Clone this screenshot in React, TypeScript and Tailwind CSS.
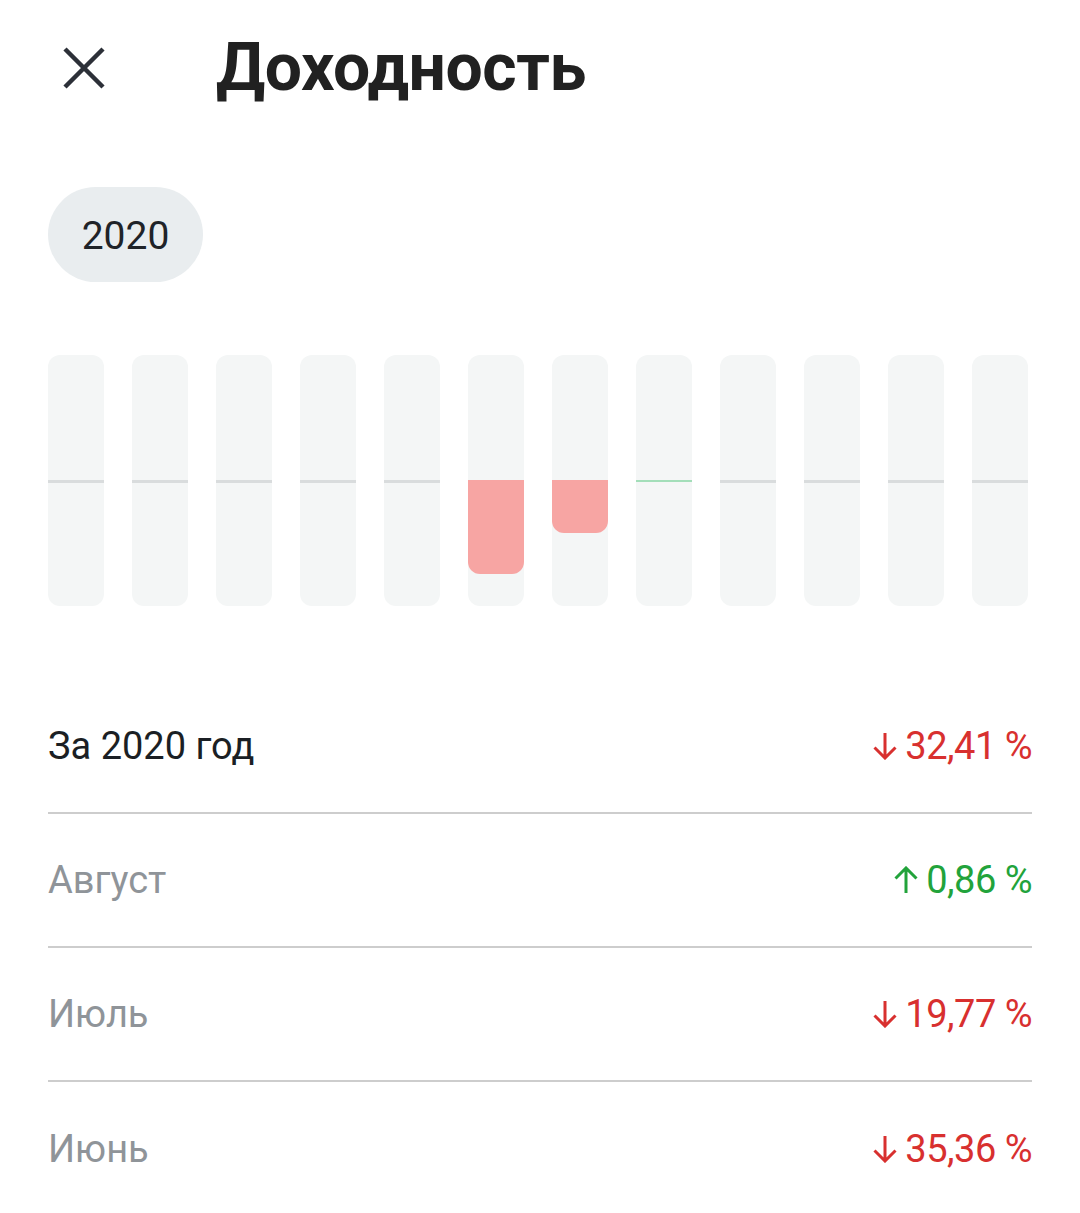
import React from 'react'

type Month = {
  value?: number
}

// monthly returns, Jan..Dec (only Jun-Aug have data)
const months: Month[] = [
  {}, {}, {}, {}, {},
  { value: -35.36 },
  { value: -19.77 },
  { value: 0.86 },
  {}, {}, {}, {},
]

const rows = [
  { label: 'За 2020 год', value: '32,41 %', up: false, main: true },
  { label: 'Август', value: '0,86 %', up: true, main: false },
  { label: 'Июль', value: '19,77 %', up: false, main: false },
  { label: 'Июнь', value: '35,36 %', up: false, main: false },
]

const CloseIcon = () => (
  <svg width="44" height="44" viewBox="0 0 44 44" fill="none">
    <path d="M3 3L41 41M41 3L3 41" stroke="#2c3038" strokeWidth="4.5" />
  </svg>
)

const Arrow = ({ up, color }: { up: boolean; color: string }) => (
  <svg
    width="24"
    height="28"
    viewBox="0 0 24 28"
    fill="none"
    className={up ? 'rotate-180' : ''}
  >
    <path d="M12 1V26M1.5 15.5L12 26L22.5 15.5" stroke={color} strokeWidth="3" />
  </svg>
)

const Bar = ({ value }: Month) => {
  const fill = value !== undefined && value < 0 ? Math.abs(value) * 2.66 : 0
  return (
    <div className="flex h-full w-[56px] flex-col overflow-hidden rounded-[12px] bg-[#f4f6f6]">
      <div className="h-[125px]" />
      {fill > 0 ? (
        <div className="rounded-b-[12px] bg-[#f7a5a3]" style={{ height: fill }} />
      ) : (
        <div className={value !== undefined ? 'h-[2px] bg-[#a3deb9]' : 'h-[3px] bg-[#d9dcdd]'} />
      )}
    </div>
  )
}

export default function App() {
  return (
    <div
      className="h-[1213px] w-[1080px] overflow-hidden bg-white px-12"
      style={{ fontFamily: 'Roboto, "Noto Sans", sans-serif' }}
    >
      {/* Header */}
      <div className="mt-[28px] flex h-[80px] items-center">
        <div className="flex w-[168px] items-center pl-[14px]">
          <CloseIcon />
        </div>
        <h1 className="text-[66px] font-bold leading-none tracking-[-0.4px] text-[#212121]">
          Доходность
        </h1>
      </div>

      {/* Year pill */}
      <div className="mt-[79px] flex h-[95px] w-[155px] items-center justify-center rounded-full bg-[#e9edef] pt-[4px] text-[39px] text-[#1f2328]">
        2020
      </div>

      {/* Chart */}
      <div className="mt-[73px] flex h-[251px] w-[980px] justify-between">
        {months.map((m, i) => (
          <Bar key={i} value={m.value} />
        ))}
      </div>

      {/* Rows */}
      <div className="mt-[74px]">
        {rows.map((r, i) => {
          const color = r.up ? '#22a33b' : '#d8302f'
          return (
            <div
              key={r.label}
              className={
                'flex h-[134px] items-center justify-between ' +
                (i < rows.length - 1 ? 'border-b-2 border-[#cdcdcd]' : '')
              }
            >
              <span className={r.main ? 'text-[38px] text-[#1b1f24]' : 'text-[38px] text-[#8f9499]'}>
                {r.label}
              </span>
              <span className="flex items-center gap-[8px] text-[38px] tracking-[-0.5px]" style={{ color }}>
                <Arrow up={r.up} color={color} />
                {r.value}
              </span>
            </div>
          )
        })}
      </div>
    </div>
  )
}
